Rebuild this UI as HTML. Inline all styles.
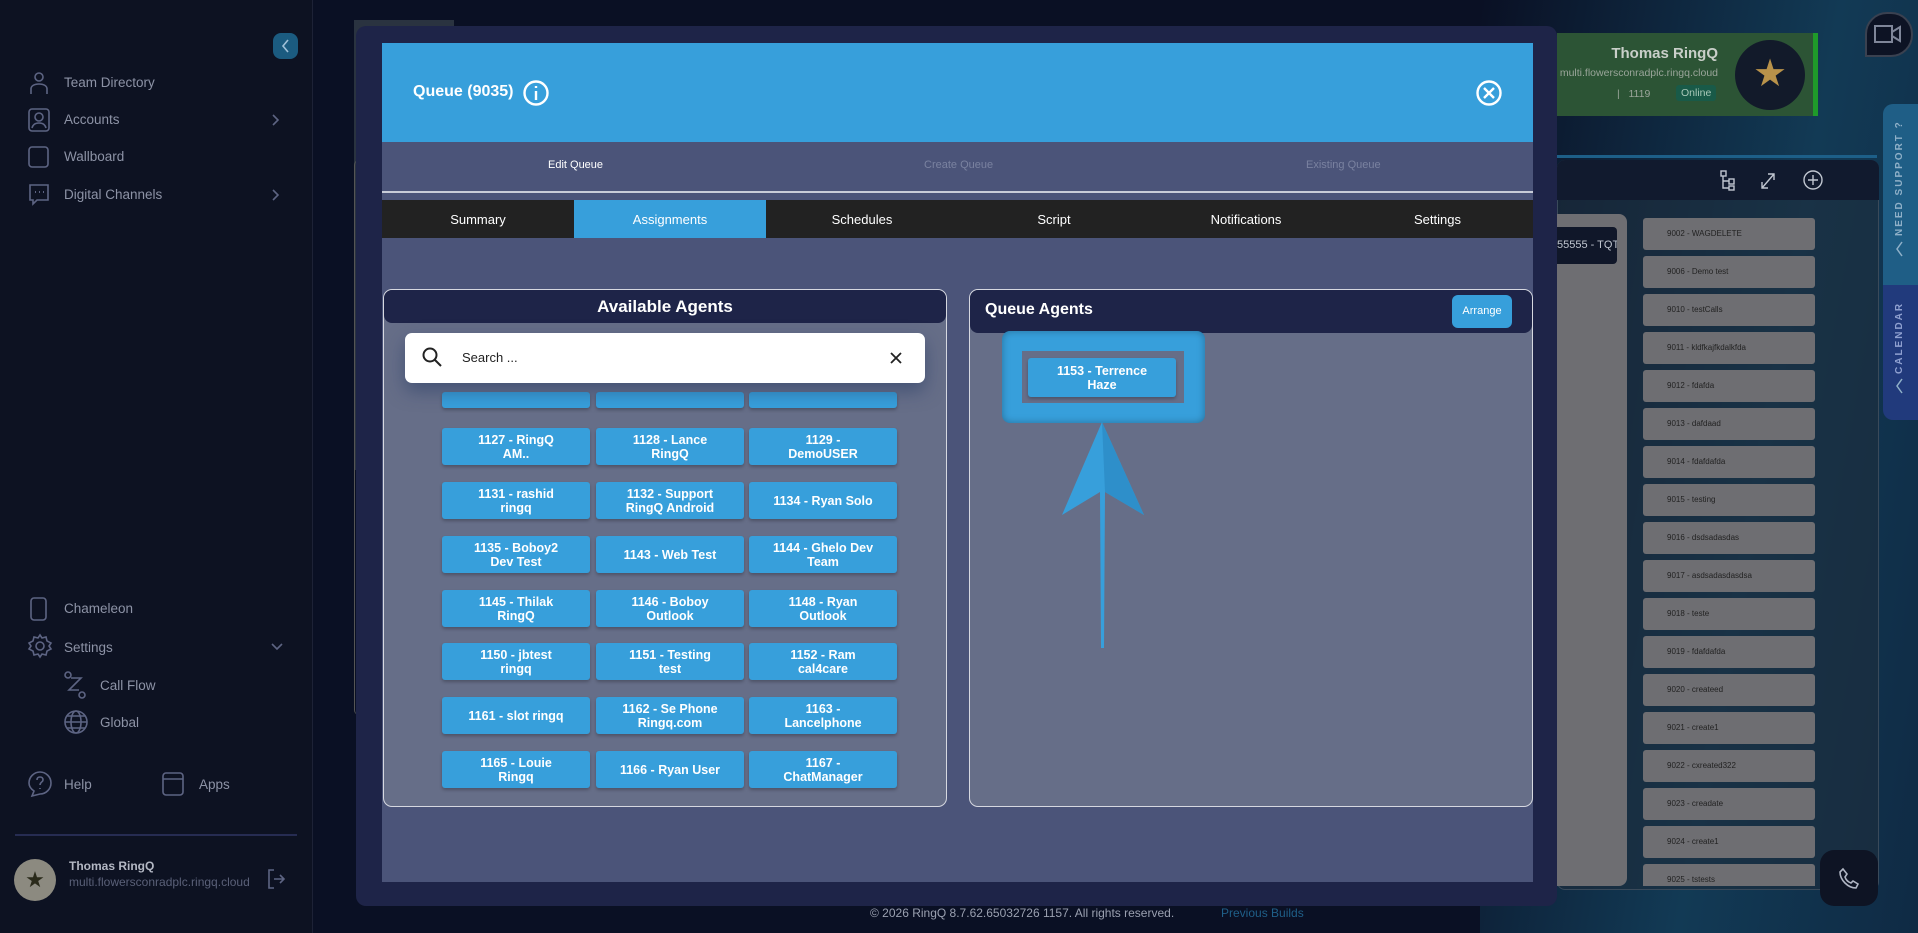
<!DOCTYPE html>
<html><head><meta charset="utf-8"><style>
*{box-sizing:border-box;margin:0;padding:0}
body{width:1918px;height:933px;overflow:hidden;background:#0a1024;font-family:"Liberation Sans",sans-serif;position:relative}
.abs{position:absolute}
.sb{left:0;top:0;width:313px;height:933px;background:#0d1222;border-right:1px solid #1d2236}
.nav{position:absolute;left:64px;color:#8d93a6;font-size:13.5px}
.ico{position:absolute;stroke:#5d6483;fill:none;stroke-width:1.6}
.btn{position:absolute;width:148px;height:37px;background:#379fdb;color:#fff;font-size:12.5px;font-weight:bold;text-align:center;display:flex;align-items:center;justify-content:center;line-height:14px;border-radius:3px;box-shadow:0 2px 3px rgba(0,0,0,.25)}
.li{position:absolute;left:1643px;width:172px;height:32px;background:#6e6e72;border-radius:3px;font-size:8px;color:#222;padding-left:24px;line-height:32px}
.tab{position:absolute;top:200px;height:38px;width:192px;color:#fff;font-size:13px;display:flex;align-items:center;justify-content:center}
</style></head><body>
<div class="abs" style="left:1480px;top:0;width:438px;height:933px;background:linear-gradient(100deg,#0a1024 0%,#123a55 60%,#0f2a44 100%)"></div>
<div class="abs" style="left:354px;top:20px;width:100px;height:450px;background:#2a3340"></div>
<div class="abs" style="left:354px;top:160px;width:10px;height:555px;border-left:1px solid #555;border-radius:8px"></div>
<!-- profile card -->
<div class="abs" style="left:1557px;top:33px;width:261px;height:83px;background:#2c5435;border-right:5px solid #1f9a2a"></div>
<div class="abs" style="left:1520px;top:45px;width:198px;text-align:right;color:#c9cfc9;font-size:15px;font-weight:bold">Thomas RingQ</div>
<div class="abs" style="left:1520px;top:67px;width:198px;text-align:right;color:#9aa59a;font-size:10.5px;white-space:nowrap;overflow:hidden;direction:rtl">multi.flowersconradplc.ringq.cloud</div>
<div class="abs" style="left:1617px;top:88px;color:#9aa59a;font-size:10.5px">|&nbsp;&nbsp;&nbsp;1119</div>
<div class="abs" style="left:1676px;top:85px;background:#195a48;color:#a8c8b8;font-size:10.5px;padding:2px 5px;border-radius:3px">Online</div>
<div class="abs" style="left:1735px;top:40px;width:70px;height:70px;border-radius:50%;background:#121a2a;color:#b8924a;font-size:38px;text-align:center;line-height:68px">★</div>
<div class="abs" style="left:1865px;top:12px;width:48px;height:45px;border:2px solid #3a4150;border-radius:22px 22px 22px 0;background:#0d1324"></div>
<svg class="abs" style="left:1873px;top:23px" width="30" height="22"><rect x="2" y="3" width="17" height="16" fill="none" stroke="#7f8699" stroke-width="2"/><path d="M19 9 L27 4 V18 L19 13" fill="none" stroke="#7f8699" stroke-width="2"/></svg>
<!-- right panel -->
<div class="abs" style="left:1557px;top:155px;width:320px;height:3px;background:#1d5f88"></div>
<div class="abs" style="left:1557px;top:160px;width:322px;height:730px;border:1px solid #3a4a5a;border-radius:8px;background:rgba(30,45,60,.6)"></div>
<div class="abs" style="left:1557px;top:160px;width:322px;height:40px;background:#111a2e;border-radius:8px 8px 0 0"></div>
<svg class="abs" style="left:1718px;top:168px" width="110" height="24" fill="none" stroke="#c0c6d0" stroke-width="1.4"><rect x="3" y="3" width="5" height="5"/><rect x="11" y="11" width="5" height="5"/><rect x="11" y="18" width="5" height="4"/><path d="M5 8V20H11M5 13H11"/><path d="M44 20L56 6M50 6H56V12M44 14V20H50"/><circle cx="95" cy="12" r="9"/><path d="M95 7V17M90 12H100"/></svg>
<div class="abs" style="left:1557px;top:214px;width:70px;height:672px;background:#6e6e72;border-radius:0 8px 8px 0"></div>
<div class="abs" style="left:1557px;top:227px;width:60px;height:37px;background:#101729;border-radius:0 4px 4px 0;color:#c0c6d0;font-size:11px;line-height:37px;white-space:nowrap;overflow:hidden">55555 - TQT(1024)</div>
<div class="li" style="top:218px">9002 - WAGDELETE</div>
<div class="li" style="top:256px">9006 - Demo test</div>
<div class="li" style="top:294px">9010 - testCalls</div>
<div class="li" style="top:332px">9011 - kldfkajfkdalkfda</div>
<div class="li" style="top:370px">9012 - fdafda</div>
<div class="li" style="top:408px">9013 - dafdaad</div>
<div class="li" style="top:446px">9014 - fdafdafda</div>
<div class="li" style="top:484px">9015 - testing</div>
<div class="li" style="top:522px">9016 - dsdsadasdas</div>
<div class="li" style="top:560px">9017 - asdsadasdasdsa</div>
<div class="li" style="top:598px">9018 - teste</div>
<div class="li" style="top:636px">9019 - fdafdafda</div>
<div class="li" style="top:674px">9020 - createed</div>
<div class="li" style="top:712px">9021 - create1</div>
<div class="li" style="top:750px">9022 - cxreated322</div>
<div class="li" style="top:788px">9023 - creadate</div>
<div class="li" style="top:826px">9024 - create1</div>
<div class="li" style="top:864px;height:22px;border-radius:3px 3px 0 0">9025 - tstests</div>
<!-- side tabs -->
<div class="abs" style="left:1883px;top:104px;width:35px;height:181px;background:#1f5e86;border-radius:10px 0 0 0"></div>
<div class="abs" style="left:1883px;top:285px;width:35px;height:135px;background:#213a7c;border-radius:0 0 0 10px"></div>
<div class="abs" style="left:1894px;top:236px;transform:rotate(-90deg);transform-origin:0 0;color:#8fb0c8;font-size:10px;font-weight:bold;letter-spacing:2px;white-space:nowrap">NEED SUPPORT ?</div>
<div class="abs" style="left:1894px;top:374px;transform:rotate(-90deg);transform-origin:0 0;color:#8fa0d0;font-size:10px;font-weight:bold;letter-spacing:2px;white-space:nowrap">CALENDAR</div>
<svg class="abs" style="left:1893px;top:240px" width="14" height="160" fill="none" stroke="#8fb0c8" stroke-width="1.5"><path d="M9 2L4 9L9 16"/><path d="M9 139L4 146L9 153"/></svg>
<!-- phone -->
<div class="abs" style="left:1820px;top:850px;width:58px;height:56px;background:#0e1424;border-radius:14px"></div>
<svg class="abs" style="left:1838px;top:867px" width="22" height="22" fill="none" stroke="#b0b6c4" stroke-width="1.6"><path d="M5 2L9 7L7 10C8 13 10 15 13 16L15 14L20 17L18 21C10 21 2 13 2 5Z"/></svg>
<!-- footer -->
<div class="abs" style="left:870px;top:906px;color:#9aa0b0;font-size:12px">© 2026 RingQ 8.7.62.65032726 1157. All rights reserved.</div>
<div class="abs" style="left:1221px;top:906px;color:#1f5f88;font-size:12px">Previous Builds</div>

<!-- sidebar -->
<div class="abs sb"></div>
<div class="abs" style="left:273px;top:33px;width:25px;height:26px;background:#1b5b80;border-radius:8px"></div>
<svg class="abs" style="left:279px;top:38px" width="14" height="16" fill="none" stroke="#9fc0d8" stroke-width="1.6"><path d="M9 2L4 8L9 14"/></svg>
<svg class="ico" style="left:28px;top:70px" width="22" height="26"><circle cx="11" cy="7" r="4"/><path d="M3 24V19C3 16 6 14 11 14C16 14 19 16 19 19V24"/></svg>
<div class="nav" style="top:75px">Team Directory</div>
<svg class="ico" style="left:27px;top:108px" width="24" height="24"><rect x="2" y="1" width="20" height="22" rx="3"/><circle cx="12" cy="9" r="4"/><path d="M5 20C6 16 9 15 12 15C15 15 18 16 19 20"/></svg>
<div class="nav" style="top:112px">Accounts</div>
<svg class="ico" style="left:271px;top:113px" width="10" height="14"><path d="M2 2L7 7L2 12"/></svg>
<svg class="ico" style="left:27px;top:145px" width="24" height="24"><rect x="2" y="2" width="19" height="20" rx="3"/></svg>
<div class="nav" style="top:149px">Wallboard</div>
<svg class="ico" style="left:27px;top:182px" width="24" height="26"><path d="M3 3H21V18H10L6 22V18H3Z"/><path d="M8 10H9M12 10H13M16 10H17" stroke-width="2"/></svg>
<div class="nav" style="top:187px">Digital Channels</div>
<svg class="ico" style="left:271px;top:188px" width="10" height="14"><path d="M2 2L7 7L2 12"/></svg>
<svg class="ico" style="left:29px;top:596px" width="20" height="26"><rect x="2" y="2" width="15" height="22" rx="3"/></svg>
<div class="nav" style="top:601px">Chameleon</div>
<svg class="ico" style="left:27px;top:633px" width="26" height="26"><circle cx="13" cy="13" r="4"/><path d="M13 2L15 5L19 4L20 8L24 10L22 13L24 16L20 18L19 22L15 21L13 24L11 21L7 22L6 18L2 16L4 13L2 10L6 8L7 4L11 5Z"/></svg>
<div class="nav" style="top:640px">Settings</div>
<svg class="ico" style="left:270px;top:642px" width="14" height="10"><path d="M2 2L7 7L12 2"/></svg>
<svg class="ico" style="left:63px;top:670px" width="24" height="30"><circle cx="5" cy="5" r="3"/><circle cx="19" cy="25" r="3"/><path d="M8 8H18L6 20H16"/></svg>
<div class="nav" style="top:678px;left:100px">Call Flow</div>
<svg class="ico" style="left:63px;top:708px" width="26" height="28"><circle cx="13" cy="14" r="11"/><ellipse cx="13" cy="14" rx="5" ry="11"/><path d="M2 14H24M4 8H22M4 20H22"/></svg>
<div class="nav" style="top:715px;left:100px">Global</div>
<svg class="ico" style="left:27px;top:770px" width="26" height="28"><path d="M13 2C19 2 24 7 24 13C24 19 19 24 13 24L5 26L7 21C4 19 2 16 2 13C2 7 7 2 13 2Z"/><path d="M10 10C10 8 11 7 13 7C15 7 16 8 16 10C16 12 13 12 13 15M13 18V19"/></svg>
<div class="nav" style="top:777px">Help</div>
<svg class="ico" style="left:161px;top:771px" width="24" height="26"><rect x="2" y="2" width="20" height="22" rx="3"/><path d="M2 8H22"/></svg>
<div class="nav" style="top:777px;left:199px">Apps</div>
<div class="abs" style="left:15px;top:834px;width:282px;height:2px;background:#262c52"></div>
<div class="abs" style="left:14px;top:859px;width:42px;height:42px;border-radius:50%;background:#8c8a80;color:#2a2a1a;font-size:22px;text-align:center;line-height:42px">★</div>
<div class="abs" style="left:69px;top:859px;color:#b4b8c4;font-size:12px;font-weight:bold">Thomas RingQ</div>
<div class="abs" style="left:69px;top:875px;color:#5a6078;font-size:12px">multi.flowersconradplc.ringq.cloud</div>
<svg class="ico" style="left:266px;top:868px" width="20" height="22"><path d="M8 2H3V20H8M8 11H18M14 7L18 11L14 15"/></svg>

<!-- modal -->
<div class="abs" style="left:356px;top:26px;width:1201px;height:880px;background:#1e2448;border-radius:10px"></div>
<div class="abs" style="left:382px;top:43px;width:1151px;height:839px;background:#4b5479"></div>
<div class="abs" style="left:382px;top:43px;width:1151px;height:99px;background:#379fdb"></div>
<div class="abs" style="left:413px;top:83px;color:#fff;font-size:16px;font-weight:bold">Queue (9035)</div>
<svg class="abs" style="left:522px;top:79px" width="28" height="28" fill="none" stroke="#fff" stroke-width="2.4"><circle cx="14" cy="14" r="11.5"/><path d="M14 12V21M14 7V9"/></svg>
<svg class="abs" style="left:1475px;top:79px" width="28" height="28" fill="none" stroke="#fff" stroke-width="2.4"><circle cx="14" cy="14" r="11.5"/><path d="M9 9L19 19M19 9L9 19"/></svg>
<div class="abs" style="left:548px;top:159px;color:#fff;font-size:11px">Edit Queue</div>
<div class="abs" style="left:924px;top:159px;color:#7a82a0;font-size:11px">Create Queue</div>
<div class="abs" style="left:1306px;top:159px;color:#7a82a0;font-size:11px">Existing Queue</div>
<div class="abs" style="left:382px;top:191px;width:1151px;height:2px;background:#c8ccd8"></div>
<div class="abs" style="left:382px;top:200px;width:1151px;height:38px;background:#222"></div>
<div class="tab" style="left:382px">Summary</div>
<div class="tab" style="left:574px;background:#379fdb">Assignments</div>
<div class="tab" style="left:766px">Schedules</div>
<div class="tab" style="left:958px">Script</div>
<div class="tab" style="left:1150px">Notifications</div>
<div class="tab" style="left:1342px;width:191px">Settings</div>

<!-- available agents -->
<div class="abs" style="left:383px;top:289px;width:564px;height:518px;background:#666e88;border:1.5px solid #d6d8e0;border-radius:9px;overflow:hidden">
 <div style="height:33px;background:#1e2448;color:#fff;font-size:17px;font-weight:bold;text-align:center;line-height:33px;border-radius:0 0 8px 8px">Available Agents</div>
</div>
<div class="btn" style="left:442px;top:392px;height:16px"></div>
<div class="btn" style="left:596px;top:392px;height:16px"></div>
<div class="btn" style="left:749px;top:392px;height:16px"></div>
<div class="abs" style="left:405px;top:333px;width:520px;height:50px;background:#fff;border-radius:7px;box-shadow:0 8px 18px rgba(40,60,100,.55)"></div>
<svg class="abs" style="left:421px;top:346px" width="24" height="24" fill="none" stroke="#222" stroke-width="2"><circle cx="9" cy="9" r="6.5"/><path d="M14 14L20 20"/></svg>
<div class="abs" style="left:462px;top:350px;color:#222;font-size:13px">Search ...</div>
<svg class="abs" style="left:889px;top:351px" width="14" height="14" stroke="#222" stroke-width="1.8"><path d="M2 2L12 12M12 2L2 12"/></svg>

<div class="btn" style="left:442px;top:428px">1127 - RingQ<br>AM..</div>
<div class="btn" style="left:596px;top:428px">1128 - Lance<br>RingQ</div>
<div class="btn" style="left:749px;top:428px">1129 -<br>DemoUSER</div>
<div class="btn" style="left:442px;top:482px">1131 - rashid<br>ringq</div>
<div class="btn" style="left:596px;top:482px">1132 - Support<br>RingQ Android</div>
<div class="btn" style="left:749px;top:482px">1134 - Ryan Solo</div>
<div class="btn" style="left:442px;top:536px">1135 - Boboy2<br>Dev Test</div>
<div class="btn" style="left:596px;top:536px">1143 - Web Test</div>
<div class="btn" style="left:749px;top:536px">1144 - Ghelo Dev<br>Team</div>
<div class="btn" style="left:442px;top:590px">1145 - Thilak<br>RingQ</div>
<div class="btn" style="left:596px;top:590px">1146 - Boboy<br>Outlook</div>
<div class="btn" style="left:749px;top:590px">1148 - Ryan<br>Outlook</div>
<div class="btn" style="left:442px;top:643px">1150 - jbtest<br>ringq</div>
<div class="btn" style="left:596px;top:643px">1151 - Testing<br>test</div>
<div class="btn" style="left:749px;top:643px">1152 - Ram<br>cal4care</div>
<div class="btn" style="left:442px;top:697px">1161 - slot ringq</div>
<div class="btn" style="left:596px;top:697px">1162 - Se Phone<br>Ringq.com</div>
<div class="btn" style="left:749px;top:697px">1163 -<br>Lancelphone</div>
<div class="btn" style="left:442px;top:751px">1165 - Louie<br>Ringq</div>
<div class="btn" style="left:596px;top:751px">1166 - Ryan User</div>
<div class="btn" style="left:749px;top:751px">1167 -<br>ChatManager</div>

<!-- queue agents -->
<div class="abs" style="left:969px;top:289px;width:564px;height:518px;background:#666e88;border:1.5px solid #d6d8e0;border-radius:9px;overflow:hidden">
 <div style="height:43px;background:#1e2448;border-radius:0 0 8px 8px"></div>
</div>
<div class="abs" style="left:985px;top:301px;color:#fff;font-size:16px;font-weight:bold">Queue Agents</div>
<div class="abs" style="left:1452px;top:295px;width:60px;height:33px;background:#379fdb;border-radius:6px;color:#fff;font-size:11px;text-align:center;line-height:33px">Arrange</div>
<div class="abs" style="left:1002px;top:331px;width:203px;height:92px;background:#379fdb;border-radius:8px;box-shadow:inset 0 0 8px rgba(0,0,0,.3)"></div>
<div class="abs" style="left:1022px;top:351px;width:162px;height:52px;background:#666e88"></div>
<div class="btn" style="left:1028px;top:358px;height:39px">1153 - Terrence<br>Haze</div>
<svg class="abs" style="left:1055px;top:420px" width="95" height="232"><path d="M47 2L89 95L50 72L49 228H46L45 72L7 95Z" fill="#379fdb"/><path d="M47 2L89 95L50 72Z" fill="#2e8fca"/></svg>
</body></html>
